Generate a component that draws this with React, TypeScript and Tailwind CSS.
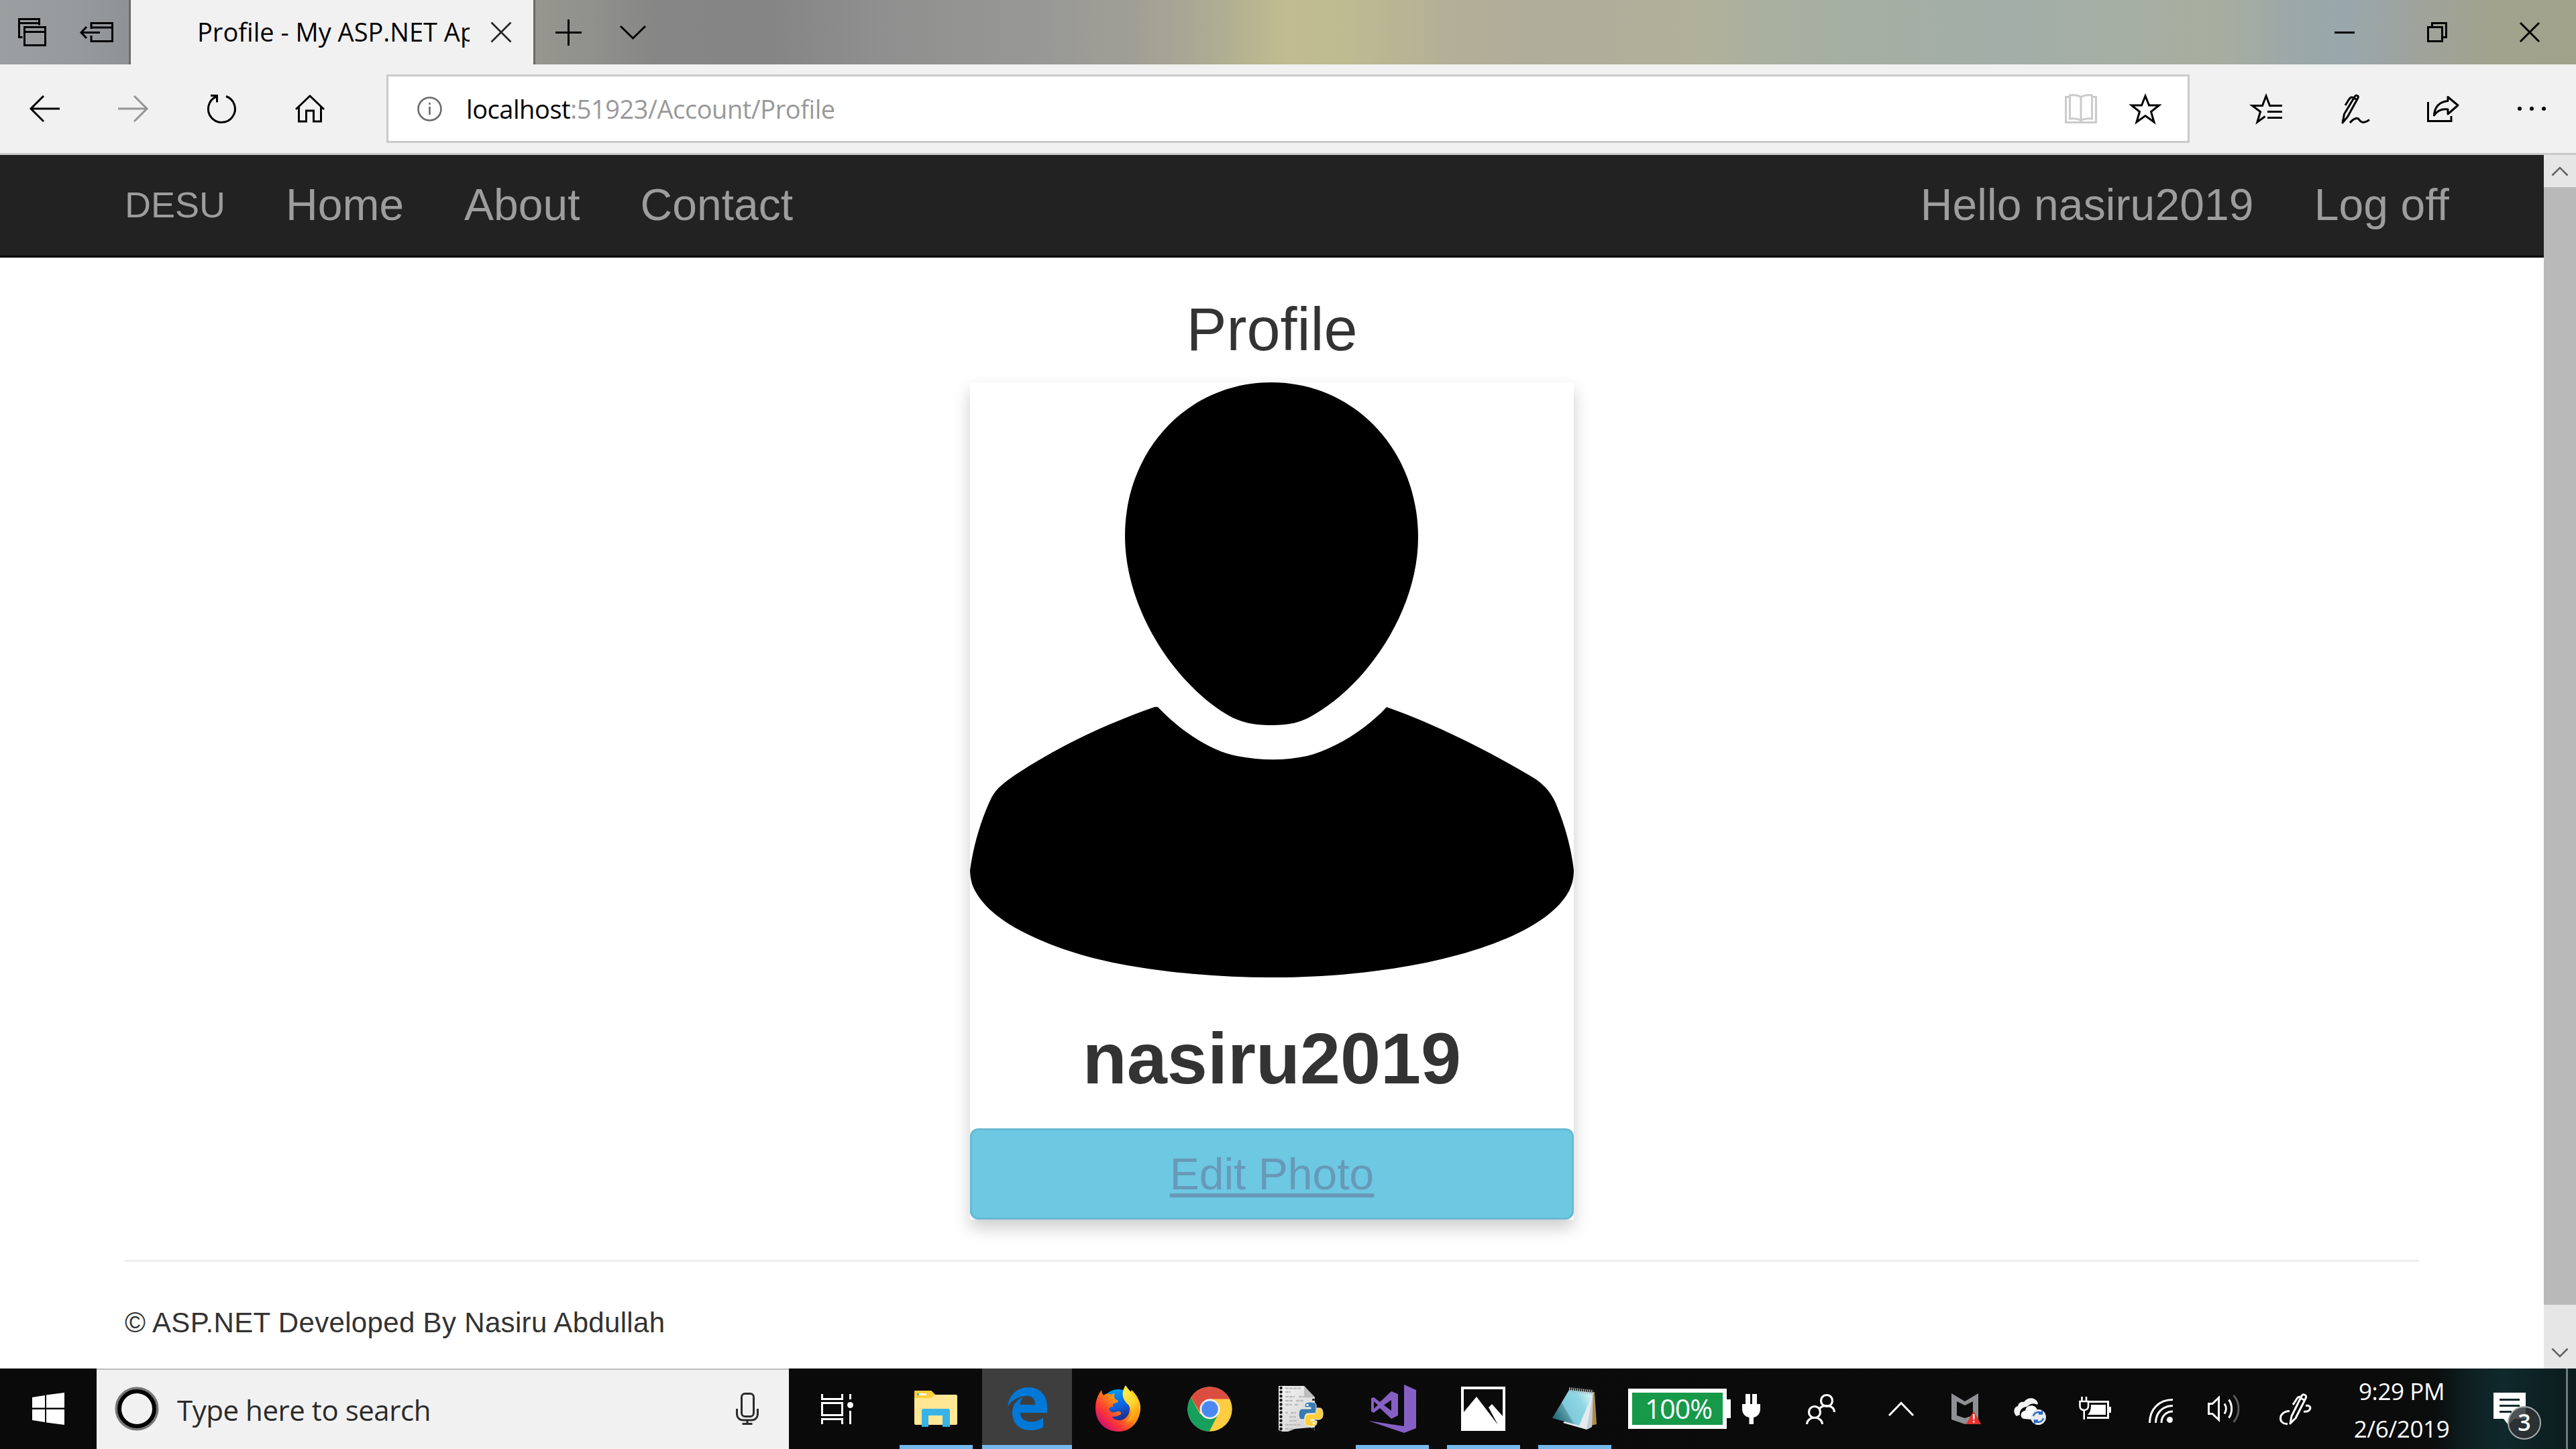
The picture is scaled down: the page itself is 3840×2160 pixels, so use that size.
import type { ReactNode } from "react";

const SEGOE = "font-['Open_Sans','Noto_Sans',sans-serif]";

type IconProps = { w: number; h: number; className?: string; children: ReactNode };

function Icon({ w, h, className = "", children }: IconProps) {
  return (
    <svg
      width={w}
      height={h}
      viewBox={`0 0 ${w} ${h}`}
      fill="none"
      stroke="currentColor"
      strokeWidth={3}
      className={`shrink-0 overflow-visible ${className}`}
    >
      {children}
    </svg>
  );
}

function Slot({ className, children }: { className: string; children: ReactNode }) {
  return <div className={`flex h-full shrink-0 items-center justify-center ${className}`}>{children}</div>;
}

/* ---------- Title bar ---------- */

function TitleBar() {
  return (
    <div className="flex h-[96px] shrink-0 items-stretch bg-[linear-gradient(90deg,#9c9fa0_0%,#969a9c_3%,#8f9397_5%,#96968f_21%,#92928d_22.5%,#868686_25.5%,#858585_30%,#8f8f8f_34%,#979795_40%,#a09f96_44%,#adab92_47%,#c1bd90_50%,#bfbb91_52%,#b4b096_56%,#b0ac9a_59%,#b0b19a_66%,#a6afa1_70%,#a2aea7_78%,#a5afa4_82%,#a8ae9f_86%,#9ca8a8_89%,#99a7ac_91%,#9fa39b_94%,#a1a38d_97%,#a0a28a_100%)] text-black">
      <Slot className="w-24">
        <Icon w={42} h={42}>
          <path d="M6.5 28.5H1.5V1.500H31.5V10.500M1.500 7.500H31.500" />
          <path d="M9.500 13.500H40.500V40.500H9.500ZM9.500 20.500H40.500" />
        </Icon>
      </Slot>
      <Slot className="w-24">
        <Icon w={50} h={30}>
          <path d="M17 10V1.500H48.500V28.500H17V20M17 8H48.500M2 15.500H30M10 7L2 15.500L10 24" />
        </Icon>
      </Slot>
      <div className={`flex w-[606px] items-center border-x-[3px] border-[#6b6b6b] bg-[#f1f1f1] ${SEGOE}`}>
        <div className="ml-[99px] w-[406px] overflow-hidden pb-[2px] text-[38px] leading-[52px] whitespace-nowrap">
          Profile - My ASP.NET Application
        </div>
        <Icon w={30} h={30} className="ml-[32px] text-[#222]">
          <path d="M0.500 0.500L29.500 29.500M29.500 0.500L0.500 29.500" strokeWidth={2.6} />
        </Icon>
      </div>
      <Slot className="w-24 pl-[2px]">
        <Icon w={39} h={39}>
          <path d="M19.500 0V39M0 19.500H39" />
        </Icon>
      </Slot>
      <Slot className="w-24 pl-[2px]">
        <Icon w={39} h={20}>
          <path d="M1 1L19.500 19L38 1" />
        </Icon>
      </Slot>
      <div className="ml-auto flex">
        <Slot className="w-[138px]">
          <Icon w={30} h={3}>
            <path d="M0 1.500H30" />
          </Icon>
        </Slot>
        <Slot className="w-[138px]">
          <Icon w={30} h={30}>
            <path d="M1.500 7.500H22.500V28.500H1.500ZM7.500 7V1.500H28.500V22.500H23" />
          </Icon>
        </Slot>
        <Slot className="w-[138px]">
          <Icon w={30} h={30}>
            <path d="M1 1L29 29M29 1L1 29" />
          </Icon>
        </Slot>
      </div>
    </div>
  );
}

/* ---------- Toolbar ---------- */

function Toolbar() {
  return (
    <div className="flex h-[135px] shrink-0 items-center border-b-[3px] border-[#cacaca] bg-[#f1f1f1] text-black">
      <Slot className="w-[132px]">
        <Icon w={45} h={40}>
          <path d="M2 20H45M21 1L2 20L21 39" />
        </Icon>
      </Slot>
      <Slot className="w-[132px] text-[#949494]">
        <Icon w={45} h={40}>
          <path d="M0 20H43M24 1L43 20L24 39" />
        </Icon>
      </Slot>
      <Slot className="w-[132px]">
        <Icon w={43} h={42}>
          <path d="M13.500 3A20 20 0 1 0 28 2.500" />
          <path d="M5 1.500H14.500V11.500" />
        </Icon>
      </Slot>
      <Slot className="w-[132px]">
        <Icon w={44} h={42}>
          <path d="M1 22L22 2L43 22M5.500 18V40H16.500V24H27.500V40H38.500V18" />
        </Icon>
      </Slot>
      <div className={`ml-12 flex h-[102px] w-[2688px] items-center border-[3px] border-[#cacaca] bg-white ${SEGOE}`}>
        <Icon w={37} h={37} className="ml-[43px] text-[#6a6a6a]">
          <circle cx="18.500" cy="18.500" r="17" strokeWidth={2.600} />
          <path d="M18.500 15V27M18.500 9V12" strokeWidth={2.600} />
        </Icon>
        <div className="ml-[36px] whitespace-nowrap text-[38px] leading-[52px] tracking-[-0.45px] text-[#999]">
          <span className="text-black">localhost</span>:51923/Account/Profile
        </div>
        <div className="mr-[15px] ml-auto flex h-full">
          <Slot className="w-24 text-[#cbcbcb]">
            <Icon w={48} h={44}>
              <path d="M7.500 4.500H1.500V42.500H46.500V4.500H40.500" />
              <path d="M24 5C20 1.500 13 1.500 7.500 2V37C13 36.500 20 36.500 24 40C28 36.500 35 36.500 40.500 37V2C35 1.500 28 1.500 24 5ZM24 5V40" />
            </Icon>
          </Slot>
          <Slot className="w-24">
            <Icon w={48} h={47}>
              <path d="M24 4L29.500 18H44.500L32.500 27.500L37 43L24 33.500L11 43L15.500 27.500L3.500 18H18.500Z" />
            </Icon>
          </Slot>
        </div>
      </div>
      <div className="ml-12 flex h-full">
        <Slot className="w-[132px]">
          <Icon w={48} h={47}>
            <path d="M48 18.500H29.500L24 4L18.500 18.500H3.500L15.500 27.500L11 43L22.500 34.500M26 27.500H48M26 36.500H48" />
          </Icon>
        </Slot>
        <Slot className="w-[132px] pl-[3px]">
          <Icon w={44} h={45}>
            <path d="M2 43L4.500 30L20.500 3.500C22 0.500 26.500 3 25 6L9.500 34L2 43ZM19 6L24.500 9.500M18 5.500C13 3.500 12 8 6 17" strokeLinejoin="round" />
            <path d="M13 43C19 36 24 35 26.500 38C29 42 33 45 42 38.500" />
          </Icon>
        </Slot>
        <Slot className="w-[132px]">
          <Icon w={48} h={42}>
            <path d="M1.500 11V39.500H36V32" />
            <path d="M31 3.500L46 16L31 29V22C22 21 15 24 10.500 31C11 19 18 10.500 31 9.500Z" strokeLinejoin="round" />
          </Icon>
        </Slot>
        <Slot className="w-[132px]">
          <Icon w={42} h={6}>
            <g fill="currentColor" stroke="none">
              <circle cx="3" cy="3" r="3" />
              <circle cx="21" cy="3" r="3" />
              <circle cx="39" cy="3" r="3" />
            </g>
          </Icon>
        </Slot>
      </div>
    </div>
  );
}

/* ---------- Web page ---------- */

function SiteNav() {
  return (
    <nav className="flex h-[153px] items-center border-b-[3px] border-[#080808] bg-[#222] px-[141px] pb-[2px] text-[66px] leading-[60px] whitespace-nowrap text-[#9d9d9d]">
      <a className="px-[45px] text-[54px]">DESU</a>
      <a className="px-[45px]">Home</a>
      <a className="px-[45px]">About</a>
      <a className="px-[45px]">Contact</a>
      <div className="-mr-[45px] ml-auto flex tracking-[0.1px]">
        <a className="px-[45px]">Hello nasiru2019</a>
        <a className="px-[45px]">Log off</a>
      </div>
    </nav>
  );
}

function Avatar() {
  return (
    <svg width="900" height="888" viewBox="0 0 900 888" fill="#000" className="block">
      <path d="M449 0C572 0 668 100 668 231C668 340 592 452 508 498C492 507 476 511 449 511C422 511 406 507 388 498C305 451 231 337 231 229C231 100 326 0 449 0Z" />
      <path d="M280 484C315 521 362 551 398 557C436 564 468 564 502 557C540 548 590 518 621 484C690 508 775 550 841 590C856 600 866 611 873 627C886 658 896 692 900 727C900 738 898 748 893 758C868 806 785 843 680 865C600 881 525 887 449 887C350 887 240 875 165 853C85 829 20 794 3 748C1 740 0 734 0 727C5 690 17 650 32 619C40 604 52 596 66 586C125 547 195 512 272 485Q277 483 280 484Z" />
    </svg>
  );
}

function ProfilePage() {
  return (
    <div className="flex-1 bg-white text-[#333]">
      <SiteNav />
      <main className="px-[186px]">
        <h2 className="pt-[58px] text-center text-[90px] leading-[99px] font-normal">Profile</h2>
        <div className="mx-auto mt-[29px] w-[900px] bg-white text-center shadow-[0_12px_24px_0_rgba(0,0,0,0.2)]">
          <Avatar />
          <h1 className="mt-[60px] text-[108px] leading-[119px] font-bold">nasiru2019</h1>
          <button className="mt-[45px] flex h-[136px] w-full items-center justify-center rounded-[12px] border-[3px] border-[#68b8d5] bg-[#6dc8e2] pb-px text-[66px] leading-[94px] text-[#6899b8] underline decoration-[6px] underline-offset-[6px] [text-decoration-skip-ink:none]">
            Edit Photo
          </button>
        </div>
        <hr className="mt-[60px] border-t-[3px] border-[#eee]" />
        <p className="mt-[61px] text-[42px] leading-[60px] tracking-[0.33px] whitespace-nowrap">
          © ASP.NET Developed By Nasiru Abdullah
        </p>
      </main>
    </div>
  );
}

function Scrollbar() {
  return (
    <div className="flex w-12 shrink-0 flex-col bg-[#e6e6e6] text-[#606060]">
      <div className="flex h-12 items-center justify-center">
        <Icon w={24} h={13}>
          <path d="M0.500 12.500L12 1L23.500 12.500" strokeWidth={2.500} />
        </Icon>
      </div>
      <div className="h-[1666px] bg-[#b9b9b9]" />
      <div className="mt-auto flex h-12 items-center justify-center">
        <Icon w={24} h={13}>
          <path d="M0.500 0.500L12 12L23.500 0.500" strokeWidth={2.500} />
        </Icon>
      </div>
    </div>
  );
}

/* ---------- Taskbar ---------- */

function FirefoxIcon() {
  return (
    <Icon w={68} h={70}>
      <defs>
        <linearGradient id="ffBody" x1="0.9" y1="0.15" x2="0.1" y2="0.9">
          <stop offset="0" stopColor="#ffcb1f" />
          <stop offset="0.4" stopColor="#ff8a16" />
          <stop offset="0.7" stopColor="#ff3636" />
          <stop offset="1" stopColor="#c4067f" />
        </linearGradient>
        <linearGradient id="ffGlobe" x1="0.3" y1="0" x2="0.6" y2="1">
          <stop offset="0" stopColor="#00a2f3" />
          <stop offset="0.5" stopColor="#0a62e0" />
          <stop offset="1" stopColor="#2b1a70" />
        </linearGradient>
        <linearGradient id="ffFlame" x1="0" y1="0" x2="0.5" y2="1">
          <stop offset="0" stopColor="#fff44f" />
          <stop offset="0.6" stopColor="#ffd630" />
          <stop offset="1" stopColor="#ff9b10" />
        </linearGradient>
      </defs>
      <g stroke="none">
        <circle cx="34" cy="32" r="26" fill="url(#ffGlobe)" />
        <path
          d="M9.500 7C9 10 10 12.500 12 15C16 12 20 12 23 14C25 13 28 12 29 12C27 15 28 19 30 21L34 23C33 26 29 27 26 28L26 32C22 32 21 34 20 36C24 43 30 40 33 39C36 38 39 41 38 43C33 46 29 47 24 47C33 57 50 52 51 36C51 28 47 25 47 20L54 7C61 14 68 24 67 36C65 56 52 69 34 69C15 69 0 55 0 34C0 24 3 14 9.500 7Z"
          fill="url(#ffBody)"
        />
        <path
          d="M45 0C50 9 65 19 65 34C65 46 58 53 46 55C55 45 55 37 49 29C41 22 37 12 45 0Z"
          fill="url(#ffFlame)"
        />
      </g>
    </Icon>
  );
}

function ChromeIcon() {
  return (
    <Icon w={67} h={67}>
      <defs>
        <clipPath id="chromeDisc">
          <circle cx="33.500" cy="33.500" r="33.200" />
        </clipPath>
      </defs>
      <g stroke="none" clipPath="url(#chromeDisc)">
        <rect width="67" height="67" fill="#ffcd41" />
        <path d="M0 6L5.500 16L19 41L46 41L31 70H0Z" fill="#16a05d" />
        <path d="M0 0H67V18.500H33.500L18.500 38L5.500 16L0 8Z" fill="#dc4d41" />
      </g>
      <circle cx="33.500" cy="33.500" r="15" fill="#f1f1f1" stroke="none" />
      <circle cx="33.500" cy="33.500" r="12.200" fill="#4a89f3" stroke="none" />
    </Icon>
  );
}

function PythonFileIcon() {
  return (
    <Icon w={66} h={68}>
      <defs>
        <linearGradient id="pyPage" x1="0" y1="0" x2="1" y2="1">
          <stop offset="0" stopColor="#f4f4f4" />
          <stop offset="1" stopColor="#cfcfcf" />
        </linearGradient>
      </defs>
      <g stroke="none">
        <path d="M0 0H38L54 17V66L48 62L24 64L14 68H6L0 66Z" fill="url(#pyPage)" />
        <path d="M38 0V17H54Z" fill="#bdbdbd" />
      </g>
      <path d="M3.500 3V66" stroke="#151515" strokeWidth="4.500" strokeDasharray="0 6.100" strokeLinecap="round" />
      <path d="M52 19V27M52 62V68" stroke="#151515" strokeWidth="3.500" strokeDasharray="3 3" />
      <path
        d="M10 3.500H34M10 9H18M10 16H24M30 16H48M10 22H22M26 22H38M10 28H20M24 28H30M10 40H14M18 40H26M16 46H26M16 52H28M10 58H32M10 64H22"
        stroke="#bcbcbc"
        strokeWidth="2.500"
        strokeDasharray="5 1"
      />
      <g stroke="#f4f4f4" strokeWidth="1">
        <path d="M39 29C39 25 43 24 48 24C53 24 56 26 56 29V37C56 40 54 41 51 41H44C40 41 39 44 39 50H35C31 50 30 46 30 42C30 37 32 34 36 34H48V32H39Z" fill="#3b7bb0" />
        <path d="M57 33H61C65 33 66 37 66 42C66 47 64 50 60 50H48V52H57V55C57 59 53 60 48 60C43 60 39 58 39 55V48C39 44 42 42 45 42H52C56 42 57 39 57 33Z" fill="#ffcf3c" />
      </g>
      <circle cx="43" cy="28.500" r="1.800" fill="#fff" stroke="none" />
      <circle cx="52.500" cy="55.500" r="1.800" fill="#fff" stroke="none" />
    </Icon>
  );
}

function NotepadIcon() {
  return (
    <Icon w={66} h={64}>
      <defs>
        <linearGradient id="padCover" x1="0" y1="0.7" x2="1" y2="0.2">
          <stop offset="0" stopColor="#1d6a7b" />
          <stop offset="0.3" stopColor="#5a9aa8" />
          <stop offset="0.34" stopColor="#7fcbdc" />
          <stop offset="0.7" stopColor="#8fd6e4" />
          <stop offset="1" stopColor="#d9f3f7" />
        </linearGradient>
      </defs>
      <g stroke="none">
        <path d="M60 7L63 7L66 55L58 57Z" fill="#b08a4a" />
        <path d="M60 8L59 59L51 63L16 53Z" fill="#e4eaee" />
        <path d="M61 8L59 59L51 63Z" fill="#c3ccd3" />
        <path d="M25 4L61 8L40 57L0 46Z" fill="url(#padCover)" />
      </g>
      <path d="M25 3.500L61 7.500" stroke="#aeb4b6" strokeWidth="7" strokeDasharray="1.500 1.500" />
    </Icon>
  );
}

const tasks: { name: string; open?: boolean; active?: boolean; icon: ReactNode }[] = [
  {
    name: "File Explorer",
    open: true,
    icon: (
      <Icon w={64} h={54}>
        <g stroke="none">
          <path d="M0 2Q0 0 2 0H25L31 6H62Q64 6 64 8V49Q64 51 62 51H2Q0 51 0 49Z" fill="#ffe793" />
          <path d="M0 2Q0 0 2 0H25L31 6L25 11H0Z" fill="#fccf3b" />
          <rect x="4" y="4" width="14" height="3" fill="#fff" />
          <rect x="4" y="4" width="3" height="3" fill="#39b3e7" />
          <path d="M11 54V30Q11 27 14 27H50Q53 27 53 30V54H42V37H21V54Z" fill="#39b3e7" />
        </g>
      </Icon>
    ),
  },
  {
    name: "Edge",
    active: true,
    icon: (
      <Icon w={59} h={64}>
        <path
          stroke="none"
          fill="#0078d7"
          d="M0 29C2 12 14 0 31 0C48 0 59 12 59 29V38H19C19 47 26 51.500 36 51.500C43 51.500 48 49 53 45V59.500C48 62.500 42 64 34 64C17 64 7 53 7 38C7 27 13 18.500 23 15C20 18 19 22 18.500 26H41C41 17 37 13 29 13C17 13 6 19 0 29Z"
        />
      </Icon>
    ),
  },
  { name: "Firefox", icon: <FirefoxIcon /> },
  { name: "Chrome", icon: <ChromeIcon /> },
  { name: "Python", icon: <PythonFileIcon /> },
  {
    name: "Visual Studio",
    open: true,
    icon: (
      <Icon w={71} h={72}>
        <g fill="#865fc5" stroke="none" fillRule="evenodd">
          <path d="M53 0L71 8V65L53 72L0 54L53 62Z" />
          <path d="M4 20L8 19L17 26L34 10L44 14V46L34 51L17 35L8 42L4 40ZM34 23L23 30.500L34 39ZM8 25V36L14 30.500Z" />
        </g>
      </Icon>
    ),
  },
  {
    name: "Photos",
    open: true,
    icon: (
      <Icon w={66} h={66}>
        <path
          stroke="none"
          fill="#fff"
          fillRule="evenodd"
          d="M0 0H66V66H0ZM4 4V38L23 15L55 57L41 31L46 26L62 44V4Z"
        />
      </Icon>
    ),
  },
  { name: "Notepad", open: true, icon: <NotepadIcon /> },
];

function BatteryMeter() {
  return (
    <div className="ml-[12px] flex h-full w-[197px] items-center">
      <div
        className={`flex h-[60px] w-[147px] items-center justify-center border-[6px] border-white bg-[#17994a] pb-[2px] pl-[3px] text-[41px] leading-[48px] tracking-[-1px] ${SEGOE}`}
      >
        100%
      </div>
      <div className="h-[28px] w-[6px] bg-white" />
      <Icon w={27} h={45} className="ml-[17px]">
        <path stroke="none" fill="#fff" d="M5 0H12V15H15V0H22V15H27V22C27 30 22 34 17 35V45H10.500V35C5 34 0 30 0 22V15H5Z" />
      </Icon>
    </div>
  );
}

function Tray() {
  return (
    <>
      <Slot className="ml-[19px] w-[142px]">
        <Icon w={44} h={45}>
          <g strokeWidth={3.200}>
            <circle cx="31" cy="10" r="8.500" />
            <path d="M20 22C26 15 42 16 42.500 27" />
            <circle cx="13" cy="27" r="8.500" />
            <path d="M1.500 45C2 32 24 32 24.500 45" />
          </g>
        </Icon>
      </Slot>
      <Slot className="w-[98px]">
        <Icon w={38} h={21}>
          <path d="M1 20L19 1.500L37 20" />
        </Icon>
      </Slot>
      <Slot className="w-24">
        <Icon w={44} h={46}>
          <g stroke="none">
            <path d="M0 0L20 12L40 0V40L20 46L0 39ZM8 12V33L20 37L32 33V12L20 18Z" fill="#8f9094" fillRule="evenodd" />
            <path d="M33 26L44 46H22Z" fill="#e5302c" />
            <path d="M32 31H34.500V39H32ZM32 41H34.500V43.500H32Z" fill="#fff" />
          </g>
        </Icon>
      </Slot>
      <Slot className="w-24 pt-[8px] pr-[2px]">
        <Icon w={48} h={40}>
          <g stroke="none">
            <path d="M4 27C-2 22 0 13 6 12C7 7 11 5 15 6C20 -2 33 -2 36 8L35 10C28 7 23 9 20 13C13 13 8 18 9 25Z" fill="#f2f2f2" />
            <path d="M15 31C8 29 10 19 17 19C18 10 32 8 35 18C42 17 45 22 44 27L38 33Z" fill="#fff" />
            <circle cx="36.500" cy="28.500" r="11.500" fill="#e9eaec" />
          </g>
          <path d="M29 27A8 8 0 0 1 42 23M44 30A8 8 0 0 1 31 34M42 18.500V23.500H37M31 38.500V33.500H36" stroke="#2a66c8" strokeWidth="2.400" />
        </Icon>
      </Slot>
      <Slot className="w-24 pb-[2px]">
        <Icon w={48} h={34}>
          <path d="M15 7.500H43.500V31.500H12" />
          <path d="M18 12H40V27H13C17 23 18 19 18 12ZM44 15H48V24H44Z" fill="#fff" stroke="none" />
          <path d="M1.500 7H14V14C14 18 11 20 7.700 20C4 20 1.500 18 1.500 14ZM4.500 0V7M11 0V7M7.700 20V34" strokeWidth="2.600" />
        </Icon>
      </Slot>
      <Slot className="w-24 pt-[6px] pl-[3px]">
        <Icon w={36} h={36}>
          <path d="M1.500 36C1.500 16 15 1.500 36 1.500M10.500 36C10.500 21 21 10.500 36 10.500M19 36C19 26 26 19 36 19" />
          <circle cx="31.500" cy="31.500" r="4.500" fill="#fff" stroke="none" />
        </Icon>
      </Slot>
      <Slot className="w-24">
        <Icon w={48} h={42}>
          <path d="M1.500 13.500H7L16.500 4.500V37.500L7 28.500H1.500Z" />
          <path d="M25 13.500C28 18 28 24 25 28.500M31.500 7.500C37 15 37 27 31.500 34.500" />
          <path d="M38.500 1C48.500 12 48.500 30 38.500 41" stroke="#5a5a5a" />
        </Icon>
      </Slot>
      <Slot className="w-[118px]">
        <Icon w={48} h={48}>
          <g strokeLinejoin="round">
            <path d="M16 46L18 35L33 5C34 1 41 3 39.500 7.500L24 38ZM31 8L37 11M31 6C26 6 26 10 20 18" />
            <path d="M15 27.500C-3 28 -2 48 12 46.500M39 19.500C50 18 47 30 36 28" />
          </g>
        </Icon>
      </Slot>
      <div className={`flex h-full w-[200px] shrink-0 flex-col items-center justify-center pt-[3px] pr-[2px] text-[35px] leading-[56px] tracking-[-0.4px] ${SEGOE}`}>
        <span>9:29 PM</span>
        <span>2/6/2019</span>
      </div>
      <Slot className="w-[120px]">
        <div className="relative">
          <Icon w={48} h={48}>
            <path d="M0 0H48V39H31L22 48L15 39H0Z" fill="#fff" stroke="none" />
            <path d="M9 10.500H39M9 19.500H39M9 28.500H27" stroke="#10282b" />
          </Icon>
          <div
            className={`absolute top-[20px] left-[21px] flex size-[50px] items-center justify-center rounded-full border-2 border-[#a5abab] bg-[#303436]/85 pb-[3px] text-[34px] leading-none font-semibold ${SEGOE}`}
          >
            3
          </div>
        </div>
      </Slot>
      <div className="ml-auto h-full w-[15px] border-l-[3px] border-[#6f7b7c]" />
    </>
  );
}

function Taskbar() {
  return (
    <div className="flex h-[120px] shrink-0 items-center bg-[linear-gradient(90deg,#0a0a0a_0%,#0b0b0b_93%,#0b0d0d_94.5%,#0e1f21_95.8%,#10292c_97.2%,#0d2224_98.5%,#0b1b1d_100%)] text-white">
      <Slot className="w-36">
        <Icon w={48} h={48}>
          <path stroke="none" fill="#fff" d="M0 7L19 4V22.500H0ZM21 3.500L48 0V22.500H21ZM0 25H19V44L0 41ZM21 25H48V48L21 44.500Z" />
        </Icon>
      </Slot>
      <div className={`flex h-full w-[1032px] shrink-0 items-center border-t-[2px] border-[#bdbdbd] bg-[#f1f1f1] pb-[2px] text-[#2b2b2b] ${SEGOE}`}>
        <Icon w={66} h={66} className="ml-[27px]">
          <circle cx="33" cy="33" r="30.500" stroke="#777" strokeWidth="4" />
          <circle cx="33" cy="33" r="26" stroke="#000" strokeWidth="6" />
        </Icon>
        <span className="ml-[27px] pt-[3px] text-[42px] leading-[60px] tracking-[-0.45px] whitespace-nowrap">Type here to search</span>
        <Icon w={34} h={48} className="mr-[45px] ml-auto">
          <rect x="8.500" y="1.500" width="18" height="34" rx="5" />
          <path d="M1.500 24V31C1.500 37 5 41 11 41H23C29 41 32.500 37 32.500 31V24M17 41V46M9.500 46.500H24.500" />
        </Icon>
      </div>
      <Slot className="w-36">
        <Icon w={48} h={45}>
          <path d="M1.500 0V7.500H31.500V0M1.500 13.500H31.500V31.500H1.500ZM1.500 45V37.500H31.500V45M43.500 0V8M43.500 25V45" />
          <circle cx="43.500" cy="16.500" r="4.500" fill="#fff" stroke="none" />
        </Icon>
      </Slot>
      <div className="ml-[7px] flex h-full shrink-0">
        {tasks.map((t) => (
          <div key={t.name} className="h-full w-[136px] px-px">
            <div className={`flex h-full flex-col items-center pt-[6px] ${t.active ? "bg-[#3e3e3e]" : ""}`}>
              <div className="flex flex-1 items-center justify-center">{t.icon}</div>
              <div className={`h-[6px] ${t.active ? "w-full bg-[#76b9ed]" : t.open ? "w-[109px] bg-[#76b9ed]" : ""}`} />
            </div>
          </div>
        ))}
      </div>
      <BatteryMeter />
      <Tray />
    </div>
  );
}

export default function App() {
  return (
    <div className="flex h-[2160px] w-[3840px] flex-col overflow-hidden bg-white font-['Liberation_Sans',Arial,sans-serif]">
      <TitleBar />
      <Toolbar />
      <div className="flex h-[1809px] shrink-0">
        <ProfilePage />
        <Scrollbar />
      </div>
      <Taskbar />
    </div>
  );
}
